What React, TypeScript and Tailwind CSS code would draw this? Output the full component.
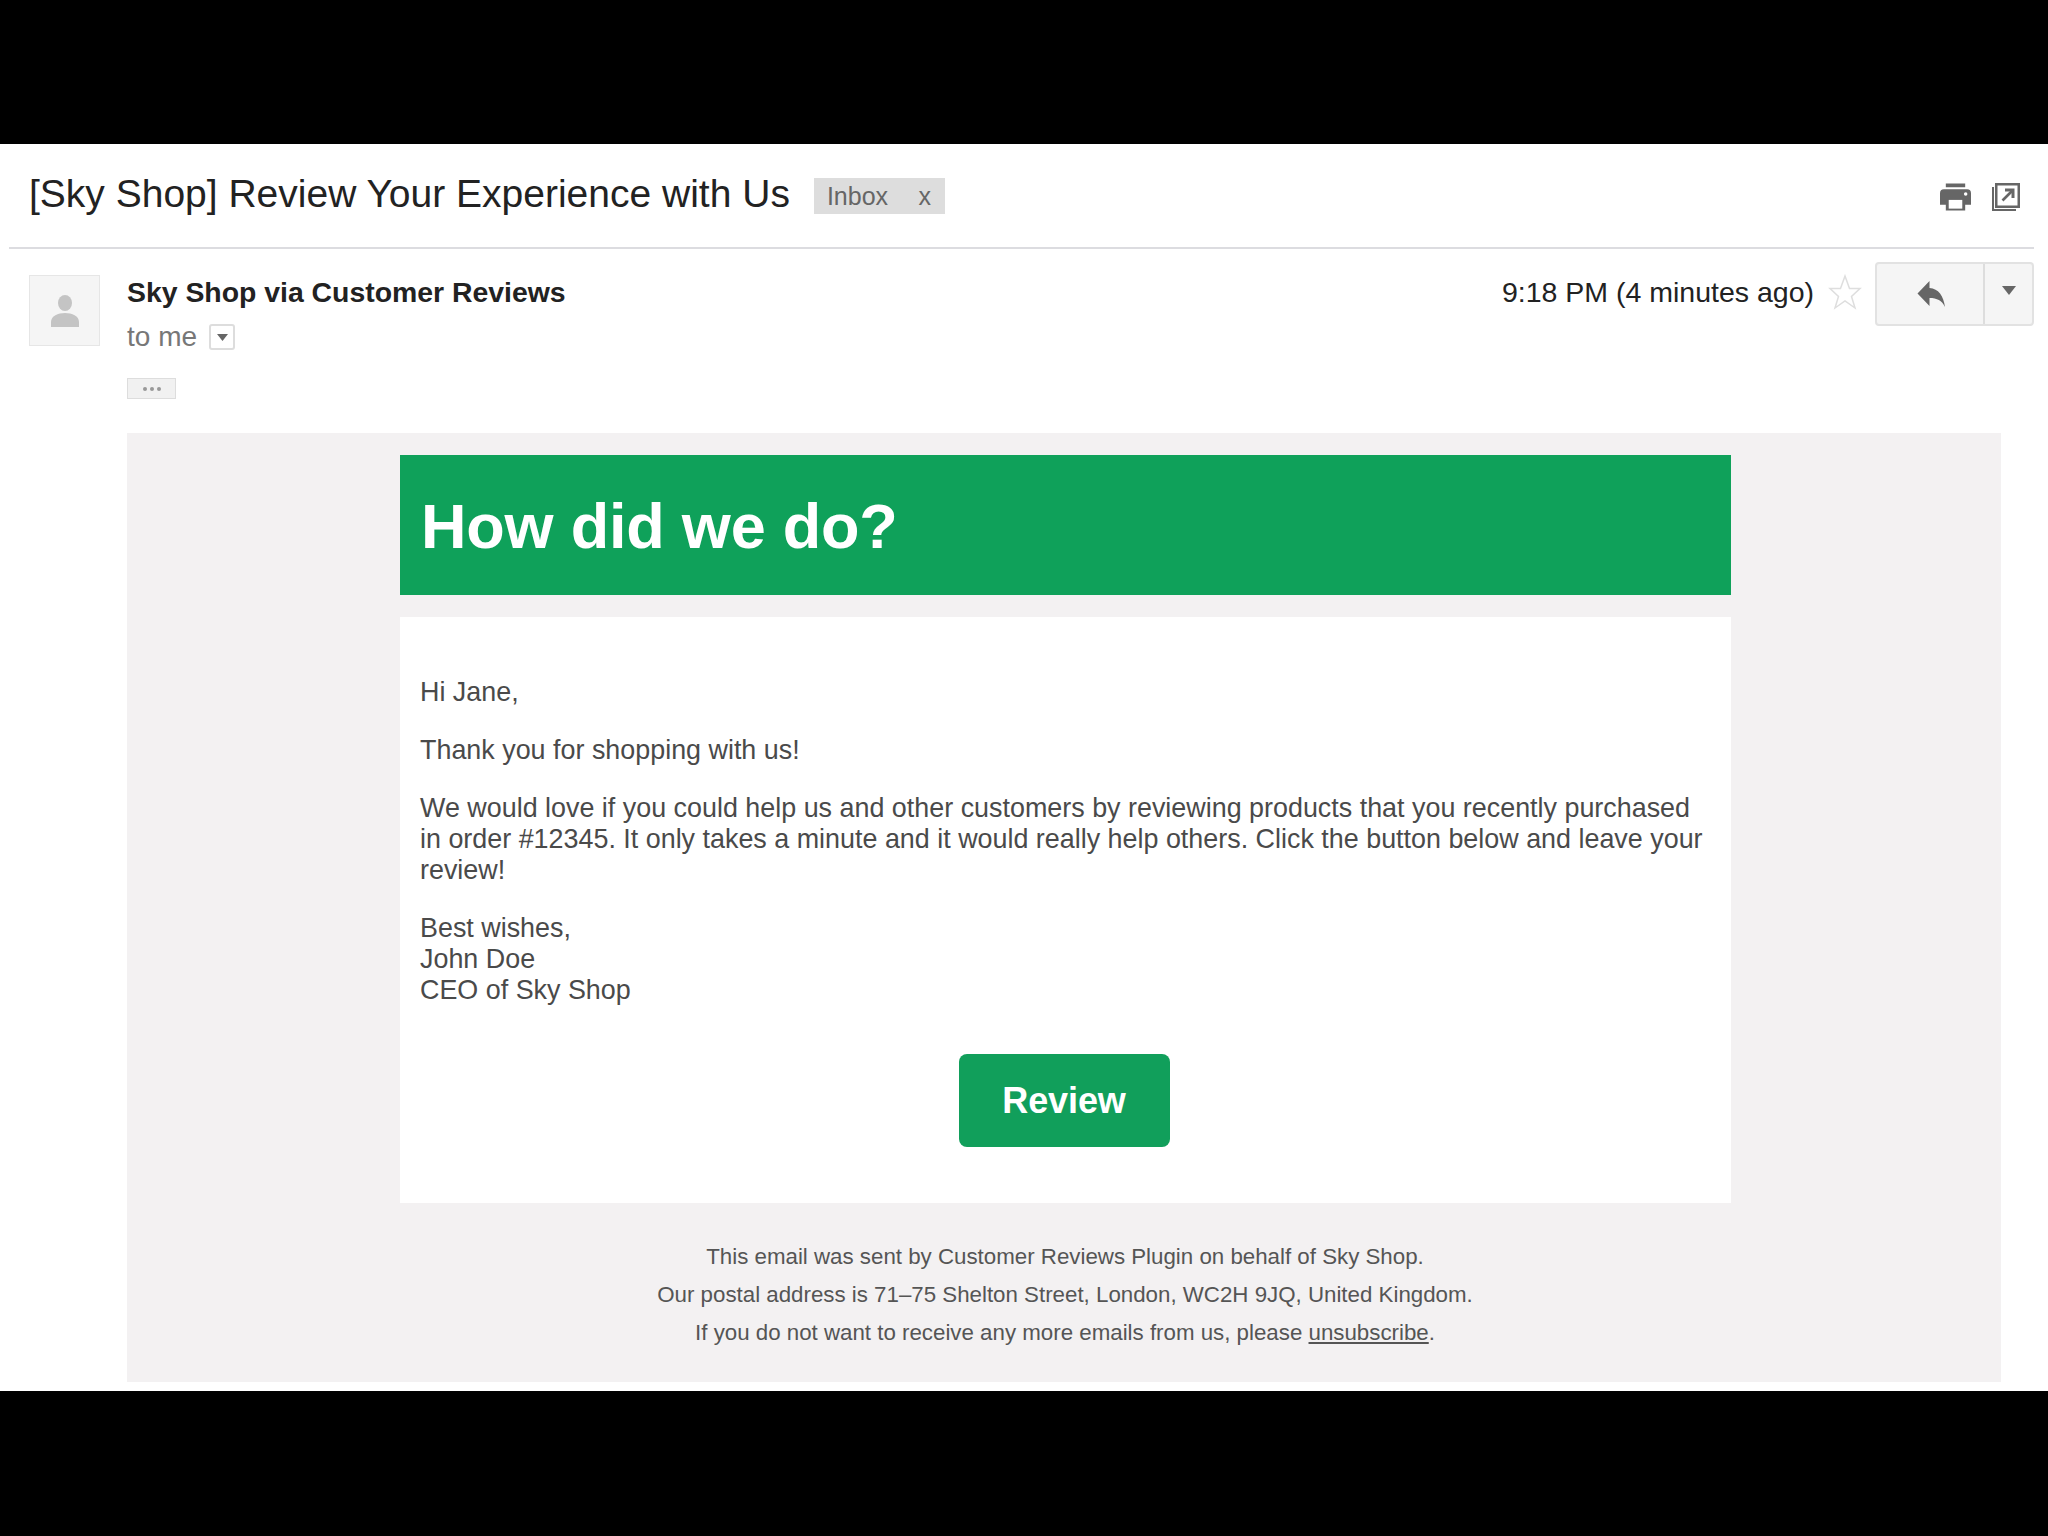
export default function App() {
  return (
    <div className="w-[2048px] h-[1536px] bg-black overflow-hidden pt-[144px] font-['Liberation_Sans',Arial,sans-serif]">
      <div className="h-[1247px] bg-white flex flex-col">
        <div className="h-[103px] flex items-center pl-[29px] pr-[28px] shrink-0">
          <span className="text-[39px] leading-[44px] text-[#222222] relative -top-[2px]">[Sky Shop] Review Your Experience with Us</span>
          <span className="ml-[24px] w-[131px] h-[36px] bg-[#dddddd] text-[#666666] text-[25px] leading-[38px] flex items-center justify-between pl-[13px] pr-[14px]">
            <span>Inbox</span><span>x</span>
          </span>
          <div className="ml-auto flex items-center gap-[21px] pt-[2px]">
            <svg width="31" height="28" viewBox="0 0 32 28" className="text-[#666666]"><path fill="currentColor" d="M6 0h20v4H6zM4 6h24a4 4 0 0 1 4 4v12h-6v6H6v-6H0V10a4 4 0 0 1 4-4z"/><rect x="9" y="17" width="14" height="9" fill="#fff"/><circle cx="26.500" cy="11" r="1.800" fill="#fff"/></svg>
            <svg width="28" height="28" viewBox="0 0 28 28" className="text-[#666666]"><path fill="currentColor" d="M3 0h25v25H3z"/><path fill="#fff" d="M5.500 2.500h20v20h-20z"/><path fill="currentColor" d="M0 4h2v22h22v2H0z"/><path stroke="currentColor" strokeWidth="2.600" d="M10.500 17.500 21 7"/><path fill="currentColor" d="M13 5.500h9.500V15l-3-.1V8.500H13z"/></svg>
          </div>
        </div>
        <div className="h-[2px] bg-[#dcdce0] ml-[9px] mr-[14px] shrink-0" />
        <div className="h-[184px] flex pt-[26px] pl-[29px] pr-[14px] shrink-0">
          <div className="w-[71px] h-[71px] bg-[#f5f5f5] border border-[#e6e6e6] flex items-center justify-center shrink-0">
            <svg width="28" height="32" viewBox="0 0 28 32"><ellipse cx="14" cy="8" rx="7" ry="8" fill="#c4c4c4"/><path fill="#c4c4c4" d="M0 32v-5c0-6 7-9 14-9s14 3 14 9v5z"/></svg>
          </div>
          <div className="ml-[27px] flex-1 min-w-0">
            <div className="text-[28.4px] leading-[34px] font-bold text-[#222222]">Sky Shop via Customer Reviews</div>
            <div className="flex items-center mt-[11px] h-[34px]">
              <span className="text-[28px] text-[#777777] leading-[34px]">to me</span>
              <span className="ml-[12px] w-[26px] h-[26px] border-2 border-[#dddddd] rounded-[3px] flex items-center justify-center">
                <svg width="11" height="7" viewBox="0 0 11 7"><path fill="#666666" d="M0 0h11L5.500 7z"/></svg>
              </span>
            </div>
            <div className="mt-[24px] w-[49px] h-[21px] bg-[#f1f1f1] border border-[#dddddd] flex items-center justify-center gap-[3px]">
              <span className="w-[4px] h-[4px] rounded-full bg-[#999999]" />
              <span className="w-[4px] h-[4px] rounded-full bg-[#999999]" />
              <span className="w-[4px] h-[4px] rounded-full bg-[#999999]" />
            </div>
          </div>
          <div className="flex items-start shrink-0">
            <span className="text-[28.500px] leading-[34px] text-[#222222]">9:18 PM (4 minutes ago)</span>
            <svg width="34" height="36" viewBox="0 0 34 36" className="ml-[14px] -mt-[1px]"><path fill="none" stroke="#dedede" strokeWidth="1.500" d="M17 2l4.500 12.500H32l-8.500 8L27 34l-10-7-10 7 3.500-11.500L2 14.500h10.500z"/></svg>
            <div className="ml-[13px] -mt-[13px] w-[159px] h-[64px] bg-[#f5f5f5] border-2 border-[#e2e2e2] rounded-[4px] flex">
              <div className="w-[108px] flex items-center justify-center border-r-2 border-[#dddddd] pl-[2px]">
                <svg width="29" height="26" viewBox="0 0 28 26"><path fill="#666666" d="M12 0v7c9 .6 14 8 15.500 19-3-6.500-8-9-15.500-9v8L0 12.500z"/></svg>
              </div>
              <div className="flex-1 flex justify-center pt-[22px]">
                <svg width="14" height="9" viewBox="0 0 14 9"><path fill="#666666" d="M0 0h14L7 9z"/></svg>
              </div>
            </div>
          </div>
        </div>
        <div className="ml-[127px] mr-[47px] h-[949px] bg-[#f3f1f2] pt-[22px] pl-[273px] pr-[270px]">
          <div className="h-[140px] bg-[#0fa15a] flex items-center pl-[21px]">
            <h1 className="text-[63px] font-bold text-white leading-none relative top-[1px] tracking-[-0.2px]">How did we do?</h1>
          </div>
          <div className="mt-[22px] h-[586px] bg-white pt-[60px] pl-[20px] pr-[21px] text-[26.900px] leading-[31px] text-[#4a4a4a]">
            <p>Hi Jane,</p>
            <p className="mt-[27px]">Thank you for shopping with us!</p>
            <p className="mt-[27px]">We would love if you could help us and other customers by reviewing products that you recently purchased in order #12345. It only takes a minute and it would really help others. Click the button below and leave your review!</p>
            <p className="mt-[27px]">Best wishes,<br />John Doe<br />CEO of Sky Shop</p>
            <div className="flex justify-center mt-[48px] pr-[2px]">
              <div className="w-[211px] h-[93px] bg-[#119f5b] rounded-[8px] flex items-center justify-center text-white font-bold text-[36px] tracking-[-0.1px]">Review</div>
            </div>
          </div>
          <div className="pt-[35px] pr-[1px] text-center text-[22.300px] leading-[38px] text-[#555555]">
            <p>This email was sent by Customer Reviews Plugin on behalf of Sky Shop.</p>
            <p>Our postal address is 71–75 Shelton Street, London, WC2H 9JQ, United Kingdom.</p>
            <p>If you do not want to receive any more emails from us, please <span className="underline">unsubscribe</span>.</p>
          </div>
        </div>
      </div>
    </div>
  );
}
